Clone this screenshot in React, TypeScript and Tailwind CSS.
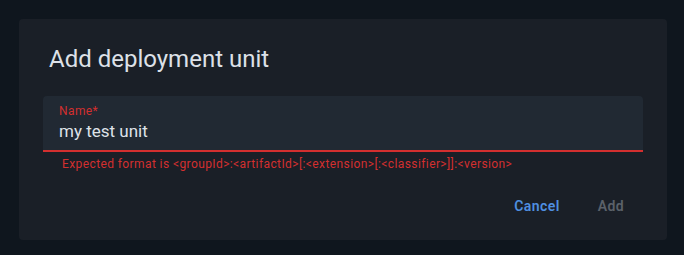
import React from "react";

export default function App() {
  return (
    <div className="w-[684px] h-[255px] bg-[#0f161e] pt-[19px] pl-[19px] font-[Roboto,sans-serif]">
      <div className="w-[648px] h-[221px] bg-[#1a1f27] rounded-[4px] flex flex-col">
        <div className="pl-[30px] pt-[24px] text-[24px] leading-[32px] text-[#dde1e8]">
          Add deployment unit
        </div>
        <div className="mx-[24px] mt-[21px]">
          <div className="h-[56px] bg-[#212933] rounded-t-[4px] border-b-2 border-[#d32f2f] pl-[16px] pt-[7px] flex flex-col">
            <div className="text-[12px] leading-[16px] text-[#d32f2f] tracking-[0.4px]">Name*</div>
            <div className="mt-[1px] text-[17px] leading-[23px] text-[#dfe2e8]">my test unit</div>
          </div>
          <div className="pl-[19px] mt-[4px] text-[12px] leading-[16px] tracking-[0.4px] text-[#d32f2f]">
            Expected format is &lt;groupId&gt;:&lt;artifactId&gt;[:&lt;extension&gt;[:&lt;classifier&gt;]]:&lt;version&gt;
          </div>
        </div>
        <div className="flex justify-end gap-[10px] pr-[24px] mt-[20px]">
          <button className="min-w-[64px] px-[8px] py-[4px] text-[14px] leading-[20px] font-semibold tracking-[0.4px] text-[#4f8fe0]">
            Cancel
          </button>
          <button className="min-w-[64px] px-[8px] py-[4px] text-[14px] leading-[20px] font-semibold tracking-[0.4px] text-[#5b616a]">
            Add
          </button>
        </div>
      </div>
    </div>
  );
}
